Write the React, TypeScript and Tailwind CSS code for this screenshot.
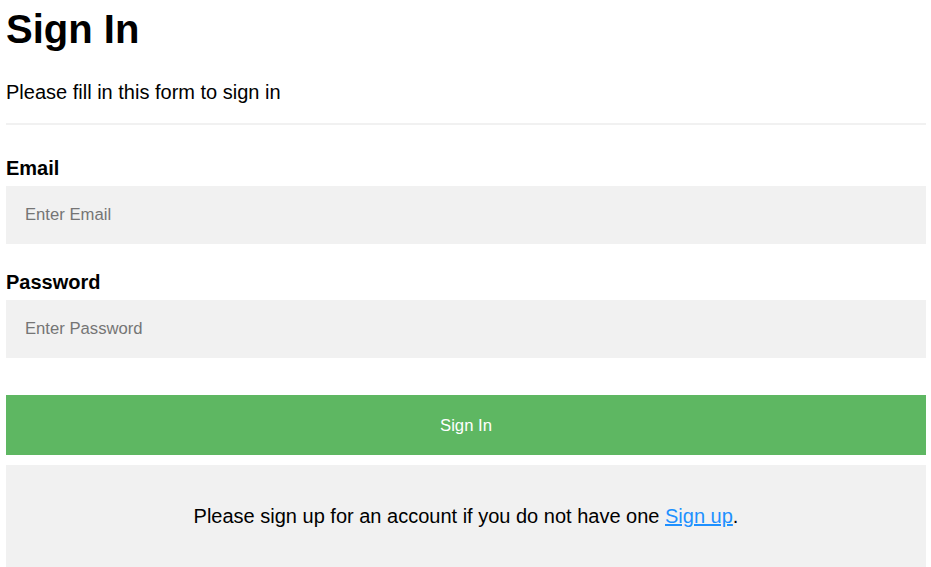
export default function App() {
  return (
    <div className="min-h-screen bg-white text-black font-['Liberation_Sans',Arial,sans-serif]">
      <form className="pl-[6px] pr-[5px]" onSubmit={(e) => e.preventDefault()}>
        <h1 className="mt-[6px] text-[40px] leading-[46px] font-bold">Sign In</h1>
        <p className="mt-[29px] text-[20px] leading-[23px]">Please fill in this form to sign in</p>
        <hr className="mt-[19px] mb-[32px] border border-[#f1f1f1]" />

        <label className="block text-[20px] leading-[23px] font-bold">Email</label>
        <input
          type="text"
          placeholder="Enter Email"
          className="mt-[6px] mb-[27px] block h-[58px] w-full bg-[#f1f1f1] px-[19px] text-[16.67px] outline-none placeholder:text-[#757575]"
        />

        <label className="block text-[20px] leading-[23px] font-bold">Password</label>
        <input
          type="password"
          placeholder="Enter Password"
          className="mt-[6px] block h-[58px] w-full bg-[#f1f1f1] px-[19px] text-[16.67px] outline-none placeholder:text-[#757575]"
        />

        <button
          type="submit"
          className="mt-[37px] block h-[60px] w-full bg-[#5eb762] text-[16.67px] text-white"
        >
          Sign In
        </button>

        <div className="mt-[10px] bg-[#f1f1f1] pt-[40px] pb-[40px] text-center">
          <p className="text-[20px] leading-[23px]">
            Please sign up for an account if you do not have one{' '}
            <a href="#" className="text-[#1e90ff] underline">
              Sign up
            </a>
            .
          </p>
        </div>
      </form>
    </div>
  );
}
